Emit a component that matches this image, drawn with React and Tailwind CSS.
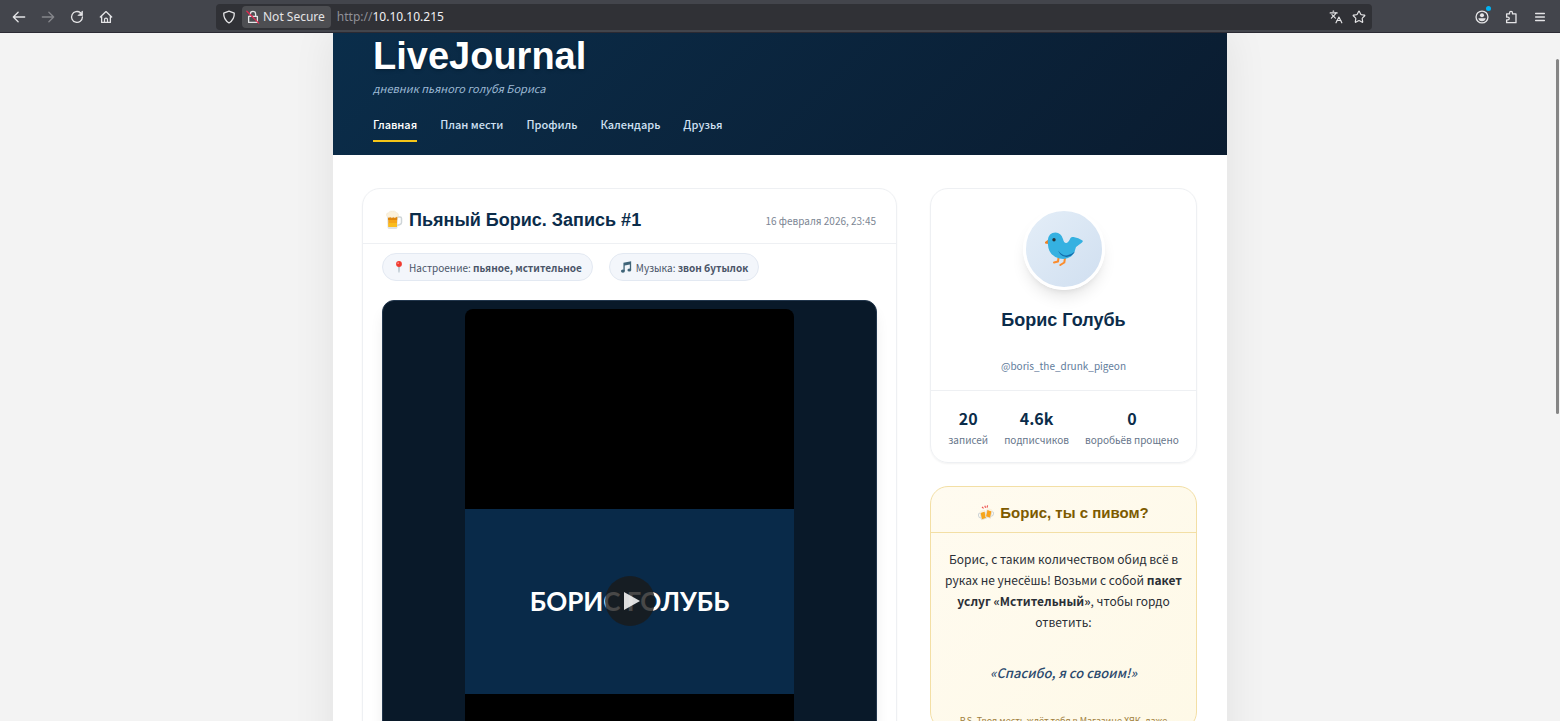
import React from 'react';
import { Languages, Star } from 'lucide-react';

const navItems = ['Главная', 'План мести', 'Профиль', 'Календарь', 'Друзья'];

const stats = [
  { value: '20', label: 'записей' },
  { value: '4.6k', label: 'подписчиков' },
  { value: '0', label: 'воробьёв прощено' },
];

// 16px grid toolbar icon
function BarIcon({ children }) {
  return (
    <svg
      viewBox="0 0 16 16"
      className="size-[14px] shrink-0"
      fill="none"
      stroke="currentColor"
      strokeWidth="1.5"
      strokeLinecap="round"
      strokeLinejoin="round"
      aria-hidden="true"
    >
      {children}
    </svg>
  );
}

function BeerIcon() {
  return (
    <svg viewBox="0 0 20 20" className="size-5 shrink-0" aria-hidden="true">
      <path d="M14 7h3q1.500 0 1.500 1.500v4q0 1.500-1.500 2l-3 1" fill="none" stroke="#cfd5d8" strokeWidth="1.5" />
      <path d="M4 5h11l-.6 12.500q-.2 1.500-1.700 1.500H6.300q-1.500 0-1.700-1.500z" fill="#dfe3e4" />
      <path d="M5 6h9.300l-.5 11H5.500z" fill="#f6a51a" />
      <path d="M5 7h9.200l-.1 3H5.200z" fill="#de850c" />
      <path d="M5.400 13h8.600l-.2 4H5.500z" fill="#fbbd1e" />
      <path d="M3.500 5.500Q3 3 5.500 2.700 7 .6 9.600 1.200 12 .4 13.300 2.500 16 3 15.300 6q-.8 1.700-2 .8-1.500 1.500-3 .3-1.500 1.200-3 0-3 1.400-3.800-1.600z" fill="#fbf1dc" stroke="#efe2c8" strokeWidth=".5" />
    </svg>
  );
}

function CheersIcon() {
  return (
    <svg viewBox="0 0 20 20" className="size-4 shrink-0" aria-hidden="true">
      <path d="M8.500 1l1 2.500M5 2.500l2 1.800M12 .5l-.7 2.700" stroke="#ef5350" strokeWidth="1.4" />
      <path d="M3 10q-3 .5-2.300 3.500.6 3 3.800 2.500M17 8q3 .5 2.300 3.500-.6 3-3.800 2.500" fill="none" stroke="#cfd5d8" strokeWidth="1.3" />
      <path d="M2.500 9l6-1.800 2 9.300-6 2z" fill="#f6a51a" stroke="#dfe3e4" />
      <path d="M17.500 7l-6-1.800-2 9.300 6 2z" fill="#f9a21b" stroke="#dfe3e4" />
      <path d="M2 9q0-2 2.200-2 2-1.800 4.500 0l.2 1-6 2zM18 7q0-2-2.200-2-2-1.800-4.500 0l-.2 1 6 2z" fill="#fbf1dc" />
    </svg>
  );
}

function PinIcon() {
  return (
    <svg viewBox="0 0 12 14" className="h-3 w-3 shrink-0" aria-hidden="true">
      <path d="M5.400 6h1.200L6.300 13.500h-.6z" fill="#78909c" />
      <circle cx="6" cy="3.500" r="3.400" fill="#f13b30" />
      <circle cx="5" cy="2.500" r="1" fill="#ff8a80" />
    </svg>
  );
}

function NoteIcon() {
  return (
    <svg viewBox="0 0 14 14" className="size-3 shrink-0" aria-hidden="true">
      <path d="M4 2l9-1.700v10.200h-1.500V4L5.500 5.200v6.600H4z" fill="#3f6478" />
      <ellipse cx="3.400" cy="11.700" rx="2.300" ry="1.900" fill="#3f6478" />
      <ellipse cx="10.900" cy="10.500" rx="2.200" ry="1.800" fill="#3f6478" />
    </svg>
  );
}

function BirdIcon() {
  return (
    <svg viewBox="0 0 40 36" className="h-9 w-10" aria-hidden="true">
      <path d="M14.500 27l-.5 3.500-4 1M21 27l-.7 4.500-4 2.500" fill="none" stroke="#fb8c2c" strokeWidth="2" strokeLinecap="round" strokeLinejoin="round" />
      <path d="M4.500 8.500L1 11q-.5 1.500 1 1.700l4 .3z" fill="#f58220" />
      <path d="M3.700 9.500Q4.500 1.500 11.500 1.500q5.500 0 7.500 6.500 1 4.500 3.500 4 2-.5 4-5 1-1.300 3-.9 5 .6 9 3.400.8 1-.5 1.900L32 16q-1 6-5 9.500-5 3.500-11.500 2Q4.500 24.500 4 14z" fill="#35b1e1" />
      <path d="M14 19.500q4.500 5.500 8.500 5 4.500-.5 8.500-4-2.500 5-8.500 5.500-6-.3-8.500-6.500z" fill="#1268a8" />
      <circle cx="10" cy="8.700" r="1.700" fill="#263238" />
    </svg>
  );
}

function BrowserBar() {
  return (
    <div className="flex h-[33px] shrink-0 items-center border-b border-[#2b2a33] bg-[#43454c] pt-px font-['Noto_Sans',sans-serif] text-[#e4e4e6]">
      <div className="flex w-[216px] shrink-0 items-center gap-[15px] pl-3">
        <button type="button" aria-label="Back">
          <BarIcon><path d="M14.500 8h-13M7 2.500L1.500 8 7 13.500" /></BarIcon>
        </button>
        <button type="button" aria-label="Forward" disabled className="text-[#85868b]">
          <BarIcon><path d="M1.500 8h13M9 2.500L14.500 8 9 13.500" /></BarIcon>
        </button>
        <button type="button" aria-label="Reload">
          <BarIcon>
            <path d="M12 3.200A6.200 6.200 0 1 0 14.200 8" />
            <path d="M14.300 1.500v4.800H9.500z" fill="currentColor" strokeWidth=".8" />
          </BarIcon>
        </button>
        <button type="button" aria-label="Home">
          <BarIcon>
            <path d="M1.500 8L8 1.800 14.500 8M3 7v7.200h10V7" />
            <path d="M6.300 14v-3.200q0-1.500 1.700-1.500t1.700 1.500V14" strokeWidth="1.4" />
          </BarIcon>
        </button>
      </div>
      <div className="flex h-[26px] min-w-0 grow items-center rounded bg-[#303136] pr-1.5">
        <span className="px-1.5">
          <BarIcon><path d="M8 1.300l6 2.200q.4 7.500-6 11.300-6.400-3.800-6-11.300z" /></BarIcon>
        </span>
        <button type="button" className="flex h-[22px] shrink-0 items-center gap-[3px] rounded-sm bg-[#4d4e52] pr-1.5 pl-1 text-[12px]">
          <BarIcon>
            <path d="M5 7V4.500q0-3 3-3t3 3V7M3 7.200h10v7H3z" />
            <path d="M1 1.500l13.500 13.500" stroke="#e22850" />
          </BarIcon>
          Not Secure
        </button>
        <a href="#" className="grow pl-1.5 text-[12px] text-[#f2f2f4]"><span className="text-[#8f9096]">http://</span>10.10.10.215</a>
        <div className="flex gap-[9px]">
          <button type="button" aria-label="Translate"><Languages size={14} /></button>
          <button type="button" aria-label="Bookmark"><Star size={14} /></button>
        </div>
      </div>
      <div className="flex w-[188px] shrink-0 items-center justify-end gap-[15px] pr-[13px]">
        <button type="button" aria-label="Account" className="relative">
          <BarIcon>
            <circle cx="8" cy="8" r="6.800" />
            <circle cx="8" cy="6" r="2.300" fill="currentColor" stroke="none" />
            <path d="M3.800 9.300h8.400q-.7 3.500-4.200 3.500t-4.200-3.500z" fill="currentColor" stroke="none" />
          </BarIcon>
          <span className="absolute -top-1 -right-0.5 size-[5px] rounded-full bg-[#00b3f4]" />
        </button>
        <button type="button" aria-label="Extensions">
          <BarIcon><path d="M3 4.500h3.300V3.300q0-1.800 1.700-1.800t1.700 1.800v1.200h4v10H3v-3.300h1.500q1.500 0 1.500-1.500T4.500 8.200H3z" /></BarIcon>
        </button>
        <button type="button" aria-label="Menu">
          <BarIcon><path d="M3 4h10M3 8h10M3 12h10" /></BarIcon>
        </button>
      </div>
    </div>
  );
}

function Header() {
  return (
    <header className="bg-linear-135 from-[#0a2d4a] to-[#0a1c30] px-10 pb-[13px]">
      <h1 className="font-['Liberation_Sans',sans-serif] text-[38px] leading-[46px] font-bold text-white text-shadow-md">LiveJournal</h1>
      <p className="text-[11px] leading-[18px] text-[#9dbad5] italic">дневник пьяного голубя Бориса</p>
      <nav className="mt-[11px] flex gap-[23px]">
        {navItems.map((item, i) => (
          <a
            key={item}
            href="#"
            className={i === 0
              ? 'border-b-2 border-[#f5c518] py-2 text-[11px] leading-4 font-medium text-white'
              : 'border-b-2 border-transparent py-2 text-[11px] leading-4 font-medium text-[#cfe0f3]'}
          >
            {item}
          </a>
        ))}
      </nav>
    </header>
  );
}

function Post() {
  return (
    <article className="min-w-0 grow rounded-[18px] border border-[#eef0f3] shadow-xs">
      <div className="flex items-center justify-between border-b border-[#eef0f3] px-5 pt-4 pb-2">
        <h2 className="flex items-center gap-1.5 font-['Liberation_Sans',sans-serif] text-[18px] leading-[30px] font-bold text-[#0b2c4a]">
          <BeerIcon />
          Пьяный Борис. Запись #1
        </h2>
        <time className="text-[10px] text-[#7c8694]">16 февраля 2026, 23:45</time>
      </div>
      <div className="px-[19px]">
        <div className="flex gap-4 py-[9px] text-[10px] text-[#4a5568]">
          <span className="flex h-7 items-center gap-1 rounded-full border border-[#e3e9f2] bg-[#f3f6fb] px-2.5">
            <PinIcon />
            <span>Настроение: <strong>пьяное, мстительное</strong></span>
          </span>
          <span className="flex h-7 items-center gap-1 rounded-full border border-[#e3e9f2] bg-[#f3f6fb] px-2.5">
            <NoteIcon />
            <span>Музыка: <strong>звон бутылок</strong></span>
          </span>
        </div>
        <div className="mt-2.5 rounded-xl border border-[#22364c] bg-[#091929] py-2 shadow-lg">
          <div className="mx-auto flex aspect-[9/16] w-2/3 items-center rounded-lg bg-black">
            <div className="relative flex aspect-video w-full items-center justify-center bg-[#092a49]">
              <span className="font-['Lato',sans-serif] text-[26px] font-bold text-white">БОРИС ГОЛУБЬ</span>
              <button type="button" aria-label="Play" className="absolute inset-0 m-auto flex size-[50px] items-center justify-center rounded-full bg-[#1a1a1a]/80">
                <svg viewBox="0 0 16 18" className="ml-1 h-[18px] w-4" aria-hidden="true">
                  <path d="M0 0l16 9L0 18z" fill="#fff" fillOpacity=".85" />
                </svg>
              </button>
            </div>
          </div>
        </div>
      </div>
    </article>
  );
}

function Profile() {
  return (
    <section className="rounded-[18px] border border-[#eef0f3] text-center shadow-xs">
      <div className="border-b border-[#eef0f3] px-5 pt-[19px] pb-3.5">
        <div className="mx-auto flex size-[82px] items-center justify-center rounded-full border-3 border-white bg-linear-135 from-[#e4eef8] to-[#d0dff0] shadow-lg">
          <BirdIcon />
        </div>
        <h2 className="mt-[15px] font-['Liberation_Sans',sans-serif] text-[18px] leading-[30px] font-bold text-[#0b2c4a]">Борис Голубь</h2>
        <p className="mt-[21px] text-[10px] leading-5 text-[#5f7c9c]">@boris_the_drunk_pigeon</p>
      </div>
      <div className="flex justify-center gap-4 pt-[15px] pb-3">
        {stats.map((s) => (
          <div key={s.label}>
            <div className="text-[16px] leading-6 font-bold text-[#0b2c4a]">{s.value}</div>
            <div className="text-[10px] leading-5 text-[#66758a]">{s.label}</div>
          </div>
        ))}
      </div>
    </section>
  );
}

function BeerPromo() {
  return (
    <section className="rounded-[18px] border border-[#f3dfa5] bg-linear-135 from-[#fffbf0] to-[#fef9e7] text-center">
      <h3 className="flex items-center justify-center gap-1.5 border-b border-[#f3dfa5] pt-[13px] pb-1.5 font-['Liberation_Sans',sans-serif] text-[15px] leading-[26px] font-bold text-[#7d5a00]">
        <CheersIcon />
        Борис, ты с пивом?
      </h3>
      <div className="px-3 pt-[15px]">
        <p className="text-[12px] leading-[21px] text-[#2b2f36]">
          Борис, с таким количеством обид всё в руках не унесёшь! Возьми с собой <strong>пакет услуг «Мстительный»</strong>, чтобы гордо ответить:
        </p>
        <p className="pt-[29px] pb-7 text-[13px] leading-6 font-medium text-[#2c4a6e] italic">«Спасибо, я со своим!»</p>
        <p className="text-[9px] leading-4 text-[#a08040]">P.S. Твоя месть ждёт тебя в Магазине ХЯК, даже</p>
      </div>
    </section>
  );
}

export default function App() {
  return (
    <div className="relative flex h-screen flex-col overflow-hidden bg-[#f3f3f3] font-['Noto_Sans_CJK_SC','Noto_Sans',sans-serif]">
      <BrowserBar />
      <div className="min-h-0 grow overflow-hidden">
        <div className="mx-auto max-w-[894px] bg-white shadow-[0_0_40px_rgba(0,0,0,0.08)]">
          <Header />
          <main className="flex items-start gap-[33px] pt-[33px] pr-[30px] pb-8 pl-[29px]">
            <Post />
            <aside className="flex w-[267px] shrink-0 flex-col gap-[23px]">
              <Profile />
              <BeerPromo />
            </aside>
          </main>
        </div>
      </div>
      <div className="absolute top-[59px] right-px h-[355px] w-[3px] rounded-full bg-[#858585]" />
    </div>
  );
}
